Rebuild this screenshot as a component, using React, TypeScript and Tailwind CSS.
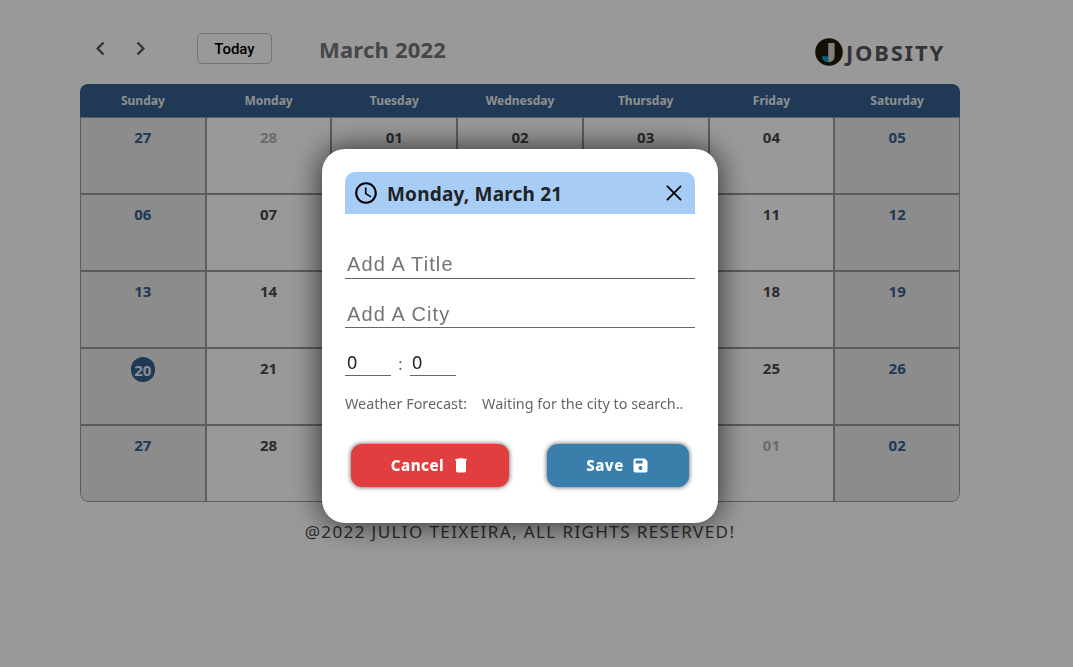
import React from "react";
import { MdAccessTime, MdChevronLeft, MdChevronRight } from "react-icons/md";
import { IoCloseOutline } from "react-icons/io5";

const WEEKDAYS = ["Sunday", "Monday", "Tuesday", "Wednesday", "Thursday", "Friday", "Saturday"];

const WEEKS = [
  ["27", "28", "01", "02", "03", "04", "05"],
  ["06", "07", "08", "09", "10", "11", "12"],
  ["13", "14", "15", "16", "17", "18", "19"],
  ["20", "21", "22", "23", "24", "25", "26"],
  ["27", "28", "29", "30", "31", "01", "02"],
];

function dayColor(week: number, day: number) {
  if (day === 0 || day === 6) return "text-[#345f92]";
  const outside = (week === 0 && day === 1) || (week === 4 && day === 5);
  return outside ? "text-[#b4b4b4]" : "text-[#484848]";
}

function Logo() {
  return (
    <div className="flex items-center">
      <svg viewBox="0 0 28 28" className="size-7">
        <circle cx="14" cy="14" r="13.8" fill="#221a06" />
        <path d="M13.200 5h6.400v13.5a5.700 5.700 0 0 1-6.400 5.700z" fill="#ddd8d4" />
        <path d="M7 18.200h6.200V24C9.600 24 7 21.800 7 18.200z" fill="#0fa3cc" />
      </svg>
      <span className="ml-[3px] text-[22px] leading-7 font-bold tracking-[1.8px] text-[#54565a]">JOBSITY</span>
    </div>
  );
}

function TrashIcon() {
  return (
    <svg viewBox="0 0 12 15" className="ml-[11px] h-[15px] w-3" fill="currentColor">
      <path d="M3.500.8Q3.700.3 4.200.3h3.600q.5 0 .7.500h2.700q.5 0 .5.600v1.200H11V12.800q0 1.800-1.700 1.800H2.700Q1 14.600 1 12.800V2.600H.3V1.400q0-.6.5-.6z" />
    </svg>
  );
}

function SaveIcon() {
  return (
    <svg viewBox="0 0 15 15" className="ml-[9px] size-[15px]" fill="currentColor">
      <path
        fillRule="evenodd"
        d="M2.200.5h9.600L14.500 3.200v9.600q0 1.700-1.700 1.700H2.200Q.5 14.500.5 12.800V2.200Q.5.5 2.200.5zM2.600 2.600v3h7v-3zM7.500 8a2 2 0 1 0 0 4 2 2 0 0 0 0-4z"
      />
    </svg>
  );
}

function Toolbar() {
  return (
    <header className="flex h-[84px] items-start">
      <div className="mt-8 flex h-8 w-[239px] items-center text-[#545454]">
        <MdChevronLeft className="ml-[7px] size-[27px]" />
        <MdChevronRight className="ml-[13px] size-[27px]" />
        <button className="mt-px ml-[43px] h-[31px] w-[75px] shrink-0 rounded-[5px] border border-[#c4c4c4] pt-px font-['Roboto',sans-serif] text-[15px] leading-none font-medium text-black">
          Today
        </button>
      </div>
      <h1 className="mt-[34px] text-[22px] leading-[30px] font-bold tracking-[0.2px] text-[#777]">March 2022</h1>
      <div className="mt-[38px] mr-[15px] ml-auto">
        <Logo />
      </div>
    </header>
  );
}

function Calendar() {
  return (
    <div className="overflow-hidden rounded-lg">
      <div className="grid h-[33px] grid-cols-7 bg-[#345f92] text-center text-xs leading-[33px] font-bold text-[#eee]">
        {WEEKDAYS.map((d) => (
          <div key={d}>{d}</div>
        ))}
      </div>
      <div className="overflow-hidden rounded-b-lg">
        {WEEKS.map((week, w) => (
          <div key={w} className="grid h-[77px] grid-cols-7">
            {week.map((day, d) => (
              <div
                key={d}
                className={`flex justify-center border border-[#999] pt-1.5 text-[15px] leading-[26px] font-bold ${
                  d === 0 || d === 6 ? "bg-[#e9e9e9]" : "bg-white"
                } ${w === 4 && d === 0 ? "rounded-bl-lg" : ""} ${w === 4 && d === 6 ? "rounded-br-lg" : ""} ${dayColor(w, d)}`}
              >
                {w === 3 && d === 0 ? (
                  <span className="mt-0.5 h-[25px] w-6 rounded-full bg-[#345f92] text-center text-[#eee]">{day}</span>
                ) : (
                  day
                )}
              </div>
            ))}
          </div>
        ))}
      </div>
    </div>
  );
}

function ReminderDialog() {
  const field = "border-b border-[#666] bg-transparent outline-none";
  const textField = `h-[30px] w-full px-0.5 font-['Liberation_Sans',sans-serif] text-xl tracking-[1.1px] placeholder:text-[#757575] ${field}`;
  const button =
    "flex h-[43px] items-center justify-center rounded-[11px] pr-0.5 shadow-[0_0_5px_rgba(0,0,0,0.7)]";
  return (
    <div className="h-[374px] w-[396px] rounded-[23px] bg-white px-[23px] pt-[23px] shadow-[0_0_30px_rgba(0,0,0,0.75)]">
      <div className="flex h-[42px] items-center rounded-t-[10px] bg-[#a7ccf6] pr-1.5 pl-2">
        <MdAccessTime className="size-[26px]" />
        <h2 className="mt-0.5 ml-2 text-[19px] font-bold tracking-[0.2px] text-[#222]">Monday, March 21</h2>
        <IoCloseOutline className="ml-auto size-[30px]" />
      </div>
      <input placeholder="Add A Title" className={`mt-[35px] pt-0.5 ${textField}`} />
      <input placeholder="Add A City" className={`mt-[19px] pt-1 ${textField}`} />
      <div className="mt-[22px] flex h-[26px] text-[#222]">
        <input defaultValue="0" className={`w-[46px] px-0.5 pb-0.5 text-lg ${field}`} />
        <span className="w-[19px] pt-0.5 text-center text-base leading-6 text-[#666]">:</span>
        <input defaultValue="0" className={`w-[46px] px-0.5 pb-0.5 text-lg ${field}`} />
      </div>
      <p className="mt-[17px] flex text-[14.4px] leading-[22px] text-[#666]">
        <span>Weather Forecast:</span>
        <span className="ml-[15px]">Waiting for the city to search..</span>
      </p>
      <div className="mt-[29px] flex justify-between px-1.5 text-[15px] font-extrabold tracking-[0.5px] text-white">
        <button className={`w-[158px] bg-[#e03e3f] ${button}`}>
          Cancel
          <TrashIcon />
        </button>
        <button className={`w-[142px] bg-[#3a7eac] ${button}`}>
          Save
          <SaveIcon />
        </button>
      </div>
    </div>
  );
}

export default function App() {
  return (
    <div className="h-[667px] overflow-hidden bg-white font-['Noto_Sans',sans-serif]">
      <main className="ml-20 w-[880px]">
        <Toolbar />
        <Calendar />
        <footer className="mt-[18px] text-center text-[17px] leading-6 tracking-[1.4px] text-[#484848]">
          @2022 JULIO TEIXEIRA, ALL RIGHTS RESERVED!
        </footer>
      </main>
      <div className="fixed inset-0 bg-black/40 pt-[149px] pl-[322px]">
        <ReminderDialog />
      </div>
    </div>
  );
}
